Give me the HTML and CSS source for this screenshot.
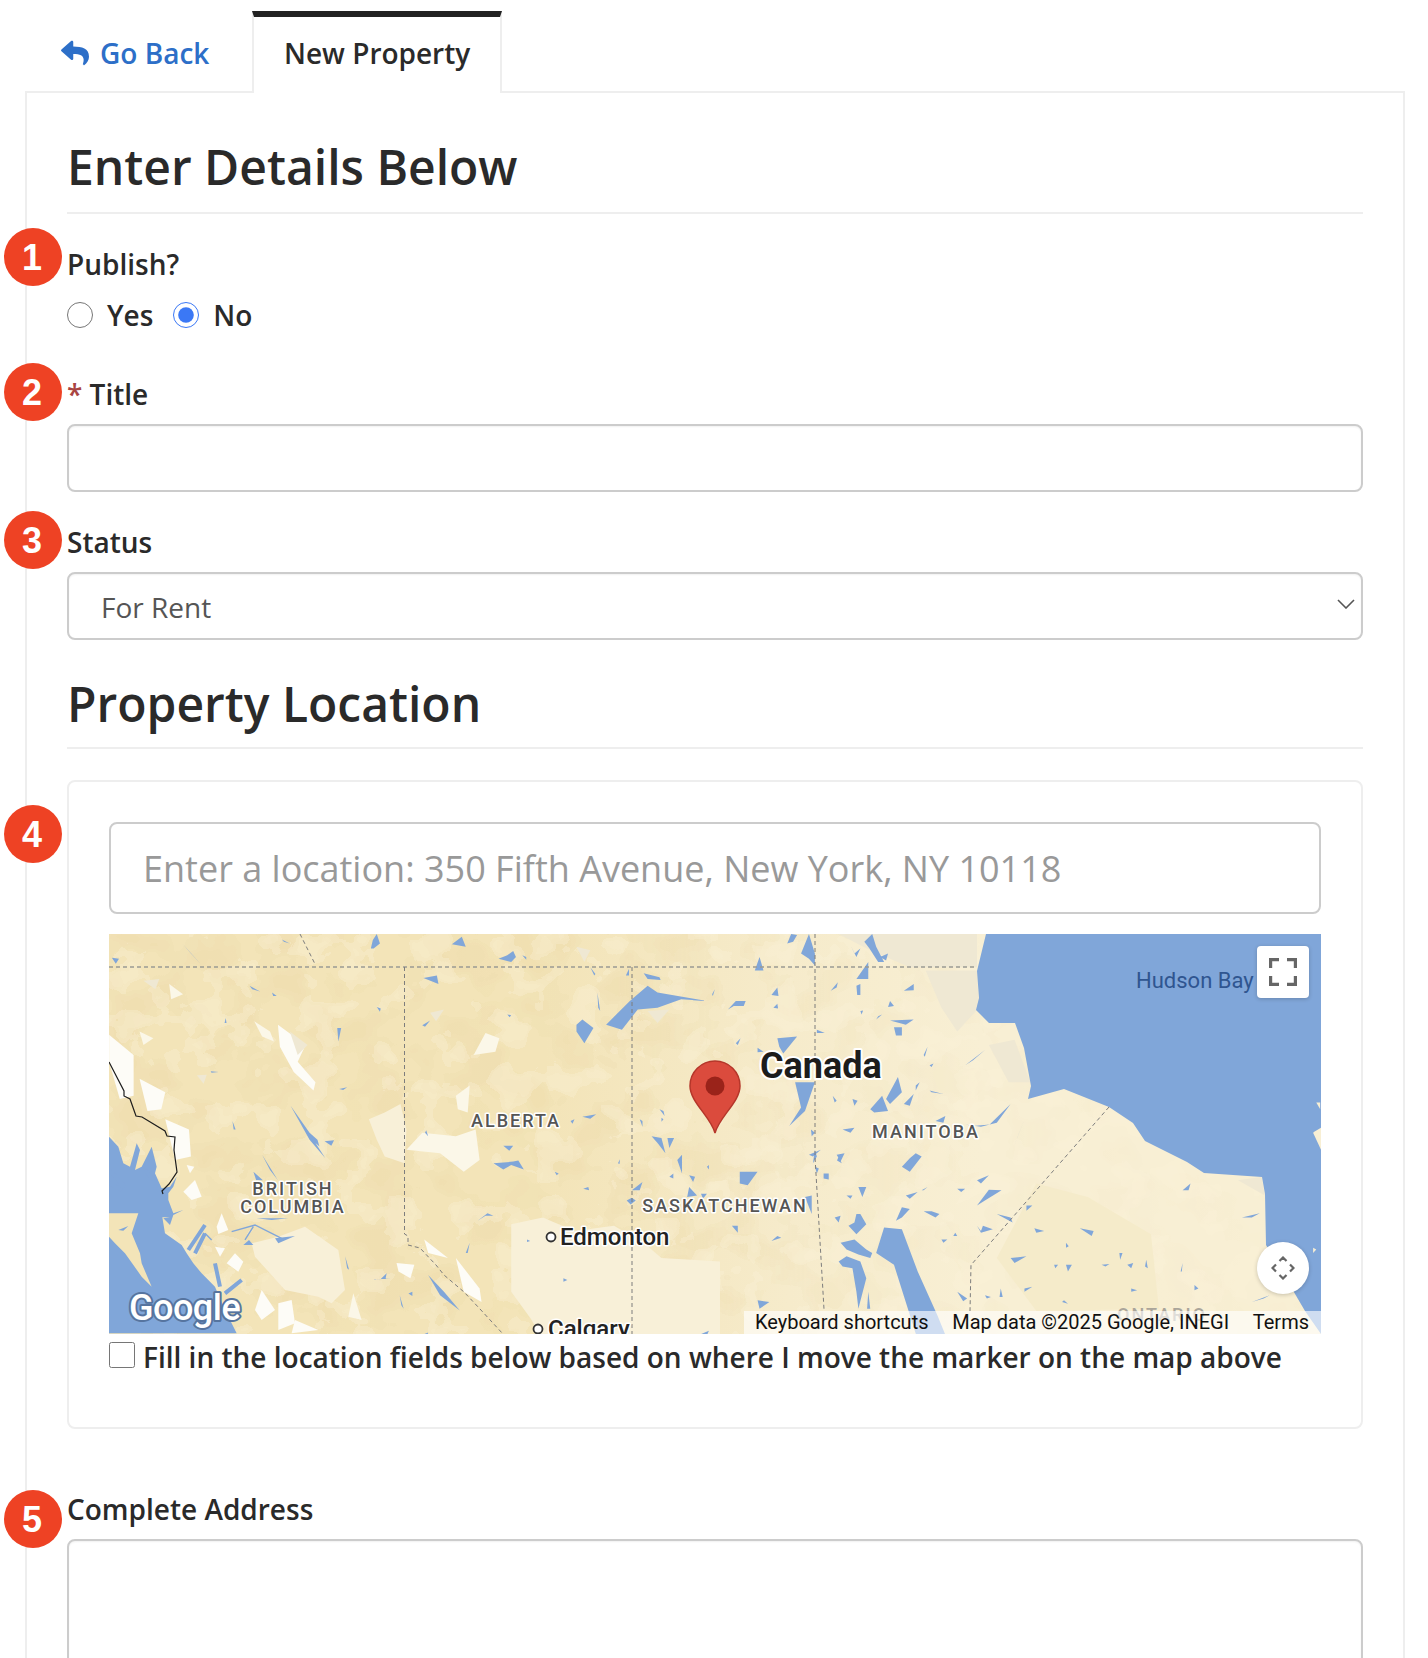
FILE: index.html
```html
<!DOCTYPE html>
<html lang="en">
<head>
<meta charset="utf-8">
<title>New Property</title>
<link rel="stylesheet" href="styles.css">
</head>
<body>
<div class="page">
  <nav class="tabs">
    <a class="tab tab-back">
      <svg class="reply-icon" viewBox="0 0 512 512"><path d="M8.309 189.836L184.313 37.851C199.719 24.546 224 35.347 224 56.015v80.053c160.629 1.839 288 34.032 288 186.258 0 61.441-39.581 122.309-83.333 154.132-13.653 9.931-33.111-2.533-28.077-18.631 45.344-145.012-21.507-183.51-176.59-185.742V360c0 20.7-24.3 31.453-39.687 18.164l-176.004-152c-11.071-9.562-11.086-26.753 0-36.328z"/></svg>
      Go Back
    </a>
    <a class="tab tab-active">New Property</a>
  </nav>
  <main class="panel">
    <h2 class="heading">Enter Details Below</h2>

    <section class="field field-publish">
      <span class="badge badge-1">1</span>
      <div class="label">Publish?</div>
      <div class="radios">
        <label class="radio"><input type="radio" name="publish">Yes</label>
        <label class="radio"><input type="radio" name="publish" checked>No</label>
      </div>
    </section>

    <section class="field field-title">
      <span class="badge badge-2">2</span>
      <div class="label"><span class="req">*</span> Title</div>
      <input class="control" type="text">
    </section>

    <section class="field field-status">
      <span class="badge badge-3">3</span>
      <div class="label">Status</div>
      <div class="select-wrap">
        <select class="control select"><option>For Rent</option></select>
        <svg class="chevron" viewBox="0 0 18 10"><path d="M1 1l8 8 8-8"/></svg>
      </div>
    </section>

    <h2 class="heading heading-location">Property Location</h2>

    <section class="card">
      <span class="badge badge-4">4</span>
      <input class="location" type="text" placeholder="Enter a location: 350 Fifth Avenue, New York, NY 10118">
      <div class="map">
        <svg class="map-svg" viewBox="0 0 1212 400" preserveAspectRatio="none">
          <defs>
            <filter id="patchA" x="0" y="0" width="100%" height="100%" color-interpolation-filters="sRGB">
              <feTurbulence type="fractalNoise" baseFrequency=".02 .024" numOctaves="3" seed="7"/>
              <feColorMatrix values="0 0 0 0 .93  0 0 0 0 .86  0 0 0 0 .67  1.6 0 0 0 -.3"/>
              <feComponentTransfer><feFuncA type="discrete" tableValues="0 0 0 0 .2 .35 .5 .5"/></feComponentTransfer>
            </filter>
            <filter id="patchB" x="0" y="0" width="100%" height="100%" color-interpolation-filters="sRGB">
              <feTurbulence type="fractalNoise" baseFrequency=".026 .03" numOctaves="3" seed="23"/>
              <feColorMatrix values="0 0 0 0 .985  0 0 0 0 .95  0 0 0 0 .85  1.6 0 0 0 -.3"/>
              <feComponentTransfer><feFuncA type="discrete" tableValues="0 0 0 0 0 .3 .4 .4"/></feComponentTransfer>
            </filter>
            <linearGradient id="landFade" x1="0" x2="1" y1="0" y2="0">
              <stop offset="0" stop-color="#f3e4b8"/>
              <stop offset=".36" stop-color="#f3e4b8"/>
              <stop offset=".56" stop-color="#f6ebcb"/>
              <stop offset=".72" stop-color="#f8efd4"/>
            </linearGradient>
            <linearGradient id="fadeEast" x1="0" x2="1" y1="0" y2="0">
              <stop offset="0" stop-color="#fff"/>
              <stop offset=".42" stop-color="#eee"/>
              <stop offset=".6" stop-color="#555"/>
              <stop offset=".78" stop-color="#222"/>
              <stop offset="1" stop-color="#111"/>
            </linearGradient>
            <mask id="westMask"><rect width="1212" height="400" fill="url(#fadeEast)"/></mask>
          </defs>

          <rect class="land-base" width="1212" height="400"/>
          <g mask="url(#westMask)"><rect width="1212" height="400" filter="url(#patchA)"/></g>
          <rect width="1212" height="400" filter="url(#patchB)"/>

          <!-- lighter plains and snow fields, traced in zoomed-crop units -->
          <g transform="translate(-9 -14.2) scale(.3954 .3382)">
            <polygon class="pale" points="1040,900 1120,880 1200,920 1300,905 1380,960 1420,1000 1568,1010 1568,1242 1120,1242 1090,1180 1040,1100"/>
            <polygon class="pale" points="680,590 720,570 760,545 775,620 770,720 720,700 700,650"/>
            <polygon class="snowish" points="815,630 900,640 950,620 960,710 920,745 860,690 775,680"/>
            <polygon class="snowish" points="945,400 975,335 1010,350 1000,390"/>
            <polygon class="snowish" points="900,520 935,490 930,570 905,560"/>
            <polygon class="snow" points="23,340 85,400 85,520 50,530 23,420"/>
            <polygon class="snow" points="100,470 165,510 155,560 120,565"/>
            <polygon class="snow" points="165,590 225,620 230,700 190,710"/>
            <polygon class="snow" points="450,310 520,370 500,420 545,480 540,505 490,450 455,375"/>
            <polygon class="snowish" points="390,300 430,330 440,360 410,345"/>
            <polygon class="snowish" points="175,190 210,220 180,235"/>
            <polygon class="snowish" points="100,330 135,350 110,370"/>
            <polygon class="snow" points="820,945 880,1000 830,985"/>
            <polygon class="snow" points="900,1000 960,1090 965,1130 920,1100"/>
            <polygon class="snow" points="750,1015 795,1020 785,1060 755,1040"/>
            <polygon class="gray" points="110,180 150,175 140,205"/>
            <polygon class="gray" points="245,460 270,458 262,485"/>
            <polygon class="gray" points="480,330 525,370 500,400"/>
            <polygon class="gray" points="835,275 870,265 850,300"/>
            <polygon class="gray" points="1205,80 1240,90 1225,125"/>
            <polygon class="gray" points="1385,270 1440,265 1410,305"/>
          </g>
          <!-- coast and snow traced at 3x from the lower-left corner -->
          <g transform="translate(-4 196) scale(.3333)">
            <polygon class="pale" points="440,340 520,320 600,290 700,360 720,480 680,520 640,500 540,480 450,380"/>
            <polygon class="water" points="12,20 40,50 55,100 75,110 95,40 105,60 90,120 110,110 140,50 155,110 150,130 170,175 195,170 215,140 205,170 190,190 190,210 205,250 235,240 205,255 195,285 175,265 195,262 172,262 180,310 230,345 245,370 265,400 290,430 330,470 360,540 395,610 12,610"/>
            <polygon class="land-w" points="12,250 40,250 100,250 80,310 105,370 110,400 140,470 110,440 60,370 30,340 12,320"/>
            <polygon class="water" points="40,300 70,288 55,302"/>
            <path class="river wide" d="M250 360L300 285M270 370L300 310M330 400L345 470M360 490L410 450M12 120L60 170M12 160L50 180M120 120L145 150"/>
            <path class="river" d="M380 305L450 285L530 325M445 290L420 330M300 310L320 330"/>
            <polygon class="water" points="510,325 570,318 520,340"/>
            <polygon class="water" points="415,345 432,330 445,345"/>
            <polygon class="water" points="455,265 550,265 500,270"/>
            <polygon class="snow" points="235,185 270,150 290,200 260,210"/>
            <polygon class="snow" points="245,105 268,110 255,130"/>
            <polygon class="snow" points="335,290 350,250 370,300 340,312"/>
            <polygon class="snow" points="330,350 360,355 345,380"/>
            <polygon class="snow" points="365,400 390,370 415,395 400,425"/>
            <polygon class="snow" points="470,480 510,540 470,570 450,540"/>
            <polygon class="snow" points="520,520 560,510 570,580 520,600"/>
            <polygon class="snow" points="570,570 640,600 560,610"/>
            <polygon class="snowish" points="745,490 770,570 730,560"/>
          </g>
          <g transform="translate(611 -14.2) scale(.3954 .3382)">
            <polygon class="tan" points="800,780 930,820 1090,930 1110,1150 800,1157 700,1000"/>
            <polygon class="gray" points="300,42 650,42 650,140 480,140 380,90"/>
            <polygon class="gray" points="520,150 650,150 655,260 600,330 560,260"/>
            <polygon class="gray" points="680,370 745,355 785,480 730,480"/>
            <polygon class="gray" points="1310,770 1370,760 1378,815"/>
          </g>

          <!-- water -->
          <polygon class="water" points="877,0 868,37 870,64 867,76 880,89 906,89 915,114 922,152 919,165 955,155 1000,173 1024,189 1036,207 1078,228 1095,239 1153,243 1156,260 1157,311 1165,324 1196,377 1212,400 1212,0"/>
          <g transform="translate(-9 -14.2) scale(.3954 .3382)">
            <path class="water" d="M1280 310L1340 240L1385 195L1410 215L1535 240L1470 235L1410 260L1360 265L1320 325ZM1205 310L1220 295L1248 320L1225 365L1205 330ZM685 85L690 60L700 42L708 70L692 85ZM890 72L915 50L925 80ZM1008 115L1030 105L1045 92L1052 110L1040 125ZM1068 105L1078 110L1078 118ZM818 172L852 165L856 190ZM1375 158L1415 170L1418 178L1385 175ZM1240 140L1253 160L1250 165ZM1330 165L1338 145L1338 165ZM1258 215L1265 270L1260 260ZM700 258L710 262L708 272ZM1030 280L1040 282L1036 288ZM815 312L835 298L822 316ZM1548 220L1555 205L1550 225ZM318 290L320 305L315 305ZM280 448L300 450L282 452ZM605 500L625 495L615 503ZM482 550L530 630L550 650L555 670L545 660L570 705L530 650ZM568 655L592 652L585 668ZM410 695L450 770L430 740ZM388 745L395 770L412 770ZM335 595L343 620L338 620ZM600 320L610 320L603 360ZM825 622L830 640L822 630ZM1020 668L1045 668L1035 683ZM995 720L1045 715L1058 712L1072 738L1040 725L1020 738ZM1150 745L1160 750L1155 755ZM1190 595L1200 590L1195 603ZM1220 582L1255 575L1240 588ZM1222 795L1235 790L1237 800ZM955 890L980 868L995 875L975 875ZM1080 945L1088 950L1080 953ZM925 985L935 955L930 985ZM1172 1060L1182 1065L1172 1070ZM620 995L630 1035L625 1030ZM830 1050L870 1100L910 1155L860 1110ZM685 1065L710 1062L725 1045L722 1062L735 1060ZM758 1110L768 1150L762 1140ZM780 1105L790 1100L790 1112ZM1415 560L1425 565L1428 580ZM1365 590L1372 595L1372 612ZM1395 640L1420 645L1430 690L1410 660ZM1435 645L1452 645L1440 675ZM1460 710L1472 695L1472 750ZM1440 760L1450 750L1450 765ZM1490 755L1505 760L1500 775ZM1490 790L1510 815L1485 820ZM1520 810L1535 810L1525 825ZM1310 720L1315 708L1314 722ZM1345 800L1372 775L1365 800ZM1332 830L1345 822L1355 830L1342 842ZM1420 585L1425 590L1420 597ZM1535 730L1540 725L1540 738ZM208 70L258 135L230 100ZM30 112L48 115L40 130ZM460 58L480 70L465 65ZM378 195L405 212L385 205ZM435 215L447 225L438 225ZM1190 1220L1215 1210L1205 1230ZM800 1235L830 1220L825 1242ZM1510 1230L1540 1215L1530 1242Z"/>
          </g>
          <g transform="translate(611 -14.2) scale(.3954 .3382)">
            <path class="water" d="M170 70L180 42L195 45L185 65ZM205 100L225 42L240 100L240 135L225 115ZM88 150L100 110L110 150ZM330 75L345 110L355 85L340 100ZM365 65L385 42L395 80L415 125L400 125L378 85ZM405 110L425 100L420 120ZM345 175L375 125L375 175ZM345 195L355 190L355 222L347 222ZM465 210L490 190L490 208ZM280 210L298 185L295 200ZM130 222L145 200L148 225ZM20 265L40 240L65 240L60 255L35 255ZM135 260L145 248L147 262ZM430 240L440 255L425 258ZM355 270L362 268L358 280ZM440 318L460 318L460 342L445 342ZM400 285L410 280L395 295ZM430 298L490 295L470 310ZM245 325L265 335L245 335ZM145 350L195 345L160 395L150 375ZM40 365L52 350L45 370ZM95 378L110 390L95 392ZM515 400L525 375L518 405ZM620 430L670 385L640 415ZM530 430L540 425L535 435ZM420 530L450 465L460 510L430 545ZM380 560L410 520L425 565L390 570ZM190 480L240 480L215 565L175 610L205 555ZM530 505L565 515L535 510ZM285 520L295 535L290 540ZM335 530L348 535L340 550ZM495 490L505 480L495 505ZM465 545L490 515L480 550ZM620 605L640 610L682 605L735 545L700 600L660 612ZM740 680L770 590L750 650ZM545 595L570 580L565 600ZM310 620L340 615L330 630ZM230 620L240 630L232 640ZM225 695L255 680L235 700ZM295 695L315 690L305 715ZM240 730L250 735L245 750ZM262 750L275 750L275 768L262 765ZM460 730L480 705L495 690L510 700L480 745ZM50 745L95 745L70 785L50 780ZM650 770L680 755L660 780ZM600 795L620 795L610 805ZM650 845L680 798L712 800L670 830ZM470 815L500 805L480 825ZM350 790L370 790L360 820ZM510 800L525 790L515 800ZM320 815L335 815L330 825ZM535 862L555 870L545 880L515 862ZM215 820L232 815L232 870ZM30 905L45 905L45 925ZM145 935L155 940L130 950ZM560 945L575 945L565 955ZM595 925L600 935L590 935ZM650 905L660 920L665 905L690 915L660 925ZM700 870L735 880L740 895ZM775 845L790 845L775 860ZM795 912L820 920L800 925ZM910 912L945 920L940 935ZM1165 1040L1170 1015L1168 1040ZM875 955L882 965L875 970ZM965 1020L985 1018L975 1025ZM1030 1020L1045 1015L1040 1030ZM1078 1005L1082 1030L1075 1025ZM875 1020L890 1020L880 1040ZM845 1020L855 1020L848 1030ZM1010 985L1018 985L1012 1005ZM1200 1080L1210 1090L1200 1095ZM1040 1090L1055 1095L1040 1100ZM770 1090L790 1085L770 1100ZM600 1100L625 1120L615 1128ZM670 1110L685 1115L675 1120ZM710 1090L715 1115L707 1115ZM870 1125L880 1135L865 1130ZM95 1125L125 1130L100 1150ZM735 1000L775 995L745 1015ZM305 955L340 945L370 975L385 985L380 1000L350 990L320 975ZM345 870L355 870L370 900L345 930L325 905L340 895ZM300 1010L320 995L355 1010L370 1060L350 1150L345 1100L335 1030L310 1025ZM290 880L305 875L300 895ZM460 850L480 855L460 880L445 890ZM395 985L415 910L460 915L500 1040L550 1170L575 1242L500 1242L440 1020ZM1170 800L1190 780L1185 800ZM1320 880L1365 868L1345 880ZM1345 1130L1390 1110L1375 1120ZM375 1100L380 1150L372 1150ZM240 680L245 700L235 720ZM300 700L308 720L296 712Z"/>
            <polygon class="land-e" points="1505,625 1520,615 1520,680 1500,630"/>
            <polygon class="land-e" points="1508,540 1518,540 1518,560"/>
            <polygon class="land-e" points="1500,970 1508,975 1500,985"/>
          </g>

          <!-- borders -->
          <polyline class="border-black" points="0,128 15,157 15,162 21,165 27,182 33,183 56,197 58,202 66,203 65,216 68,238 60,250 53,257 54,260"/>
          <line class="border-wide" x1="0" y1="33" x2="868" y2="33"/>
          <polyline class="border" points="191,0 206,30"/>
          <polyline class="border" points="295.5,33 295.5,300 299,302 299,311 311,314 327,331 335,341 355,358 371,375 394,400"/>
          <line class="border" x1="523" y1="33" x2="523" y2="400"/>
          <polyline class="border" points="706,0 706,223 715,375"/>
          <polyline class="border" points="1000,173 862,331 861,377"/>

          <!-- labels -->
          <text class="t-region" x="407" y="193" text-anchor="middle">ALBERTA</text>
          <text class="t-region" x="184" y="261" text-anchor="middle">BRITISH</text>
          <text class="t-region" x="184" y="279" text-anchor="middle">COLUMBIA</text>
          <text class="t-region" x="817" y="204" text-anchor="middle">MANITOBA</text>
          <text class="t-region" x="616" y="278" text-anchor="middle">SASKATCHEWAN</text>
          <text class="t-region t-faint" x="1053" y="387" text-anchor="middle">ONTARIO</text>
          <text class="t-country" x="651" y="144">Canada</text>
          <circle class="t-dot" cx="442" cy="303" r="4.5"/>
          <text class="t-city" x="451" y="311">Edmonton</text>
          <circle class="t-dot" cx="429" cy="395" r="4.5"/>
          <text class="t-city" x="439" y="403">Calgary</text>
          <text class="t-water" x="1027" y="54">Hudson Bay</text>
          <text class="t-google" x="20" y="386">Google</text>

          <!-- marker -->
          <path class="pin" d="M606 199C602 183 581 168 581 152A25 25 0 1 1 631 152C631 168 610 183 606 199Z"/>
          <circle class="pin-dot" cx="606" cy="152" r="9.5"/>
        </svg>

        <button class="map-btn map-full" type="button" aria-label="Fullscreen">
          <svg viewBox="0 0 28 28"><path d="M1.500 10V1.500H10M18 1.500H26.500V10M26.500 18V26.500H18M10 26.500H1.500V18"/></svg>
        </button>
        <button class="map-btn map-compass" type="button" aria-label="Move">
          <svg viewBox="0 0 24 24"><path d="M8.500 5L12 1.500L15.500 5M5 8.500L1.500 12L5 15.500M19 8.500L22.500 12L19 15.500M8.500 19L12 22.500L15.500 19"/></svg>
        </button>
        <div class="attrib">
          <span>Keyboard shortcuts</span>
          <span>Map data ©2025 Google, INEGI</span>
          <span>Terms</span>
        </div>
      </div>
      <label class="check"><input type="checkbox">Fill in the location fields below based on where I move the marker on the map above</label>
    </section>

    <section class="field field-address">
      <span class="badge badge-5">5</span>
      <div class="label">Complete Address</div>
      <textarea class="control textarea"></textarea>
    </section>
  </main>
</div>
</body>
</html>
```
FILE: styles.css
```css
* { box-sizing: border-box; }
html, body { margin: 0; padding: 0; background: #fff; }
body {
  height: 1658px;
  overflow: hidden;
  font-family: "Open Sans", "Noto Sans", sans-serif;
  color: #2a2a2a;
}
.page { padding: 11px 23px 0 25px; }

/* tabs */
.tabs { display: flex; height: 80px; }
.tab { display: flex; align-items: center; font-size: 28px; font-weight: 600; line-height: 36px; }
.tab-back { width: 227px; padding: 4px 0 0 36px; color: #2d6fc8; gap: 11px; }
.reply-icon { width: 28px; height: 28px; fill: #2d6fc8; }
.tab-active {
  position: relative;
  z-index: 1;
  width: 250px;
  height: 82px;
  padding: 0 0 4px 30px;
  background: #fff;
  border: 2px solid #eee;
  border-top: 6px solid #222;
  border-bottom: 0;
}

/* panel */
.panel {
  position: relative;
  height: 1600px;
  padding: 43px 40px 0;
  border: 2px solid #eee;
}
.heading {
  margin: 0;
  padding-bottom: 14px;
  font-size: 48px;
  line-height: 62px;
  font-weight: 600;
  border-bottom: 2px solid #eee;
}
.heading-location { margin-top: 33px; padding-bottom: 12px; }

.field { position: relative; }
.field-publish { margin-top: 32px; }
.field-title { margin-top: 43px; }
.field-status { margin-top: 32px; }
.field-address { margin-top: 62px; }

.label { font-size: 28px; font-weight: 600; line-height: 36px; margin-bottom: 12px; }
.req { color: #a94442; }

.radios { display: flex; gap: 20px; margin-top: 15px; }
.radio { display: flex; align-items: center; font-size: 28px; font-weight: 600; line-height: 36px; }
.radio input {
  width: 26px;
  height: 26px;
  margin: 0 14px 0 0;
  accent-color: #3b78f5;
}
.field-publish .label { margin-bottom: 0; }

.control {
  display: block;
  width: 100%;
  height: 68px;
  border: 2px solid #ccc;
  border-radius: 8px;
  background: #fff;
  box-shadow: inset 0 1px 2px rgba(0,0,0,.06);
  font-family: inherit;
  outline: none;
}
.select-wrap { position: relative; }
.select {
  appearance: none;
  padding: 2px 32px 0;
  font-size: 28px;
  color: #555;
}
.chevron {
  position: absolute;
  right: 8px;
  top: 27px;
  width: 18px;
  height: 10px;
  fill: none;
  stroke: #555;
  stroke-width: 1.6;
}
.textarea { height: 240px; resize: none; }

/* card */
.card {
  position: relative;
  margin-top: 31px;
  height: 649px;
  padding: 40px 40px 0;
  border: 2px solid #eee;
  border-radius: 8px;
}
.location {
  display: block;
  width: 100%;
  height: 92px;
  padding: 0 32px;
  border: 2px solid #ccc;
  border-radius: 8px;
  font-family: "Open Sans", sans-serif;
  font-size: 36px;
  color: #333;
  outline: none;
}
.location::placeholder { color: #999; opacity: 1; }

.map {
  position: relative;
  margin-top: 20px;
  height: 400px;
  overflow: hidden;
  background: #f8efd4;
}
.map-svg { display: block; width: 100%; height: 100%; }

.land-base { fill: url(#landFade); }
.land-w { fill: #f3e4b8; }
.land-e { fill: #f8efd4; }
.pale { fill: #f8f0d8; }
.tan { fill: #f5ebca; }
.snow { fill: #fdfcf7; }
.snowish { fill: #fbf7e8; }
.gray { fill: #efe8d3; }
.water { fill: #80a6d9; }
.river { fill: none; stroke: #80a6d9; stroke-width: 1.4; vector-effect: non-scaling-stroke; }
.wide { stroke-width: 4; }
.border-black { fill: none; stroke: #1d1d1d; stroke-width: 1.2; }
.border { fill: none; stroke: #7d7d7d; stroke-width: 1; stroke-dasharray: 4 3; }
.border-wide { stroke: #9a9a94; stroke-width: 1.6; stroke-dasharray: 4 3; }

.map-svg text { font-family: Roboto, sans-serif; paint-order: stroke; stroke-linejoin: round; }
.t-region {
  font-size: 18px;
  font-weight: 500;
  letter-spacing: 2px;
  fill: #555;
  stroke: #fff;
  stroke-width: 3px;
}
.t-faint { fill: #aaa59a; stroke: none; }
.t-country { font-size: 36px; font-weight: 700; fill: #1c1c1c; stroke: #fff; stroke-width: 4px; }
.t-city { font-size: 24px; font-weight: 500; fill: #222; stroke: #fff; stroke-width: 3px; }
.t-dot { fill: #fff; stroke: #333; stroke-width: 1.8; }
.t-water { font-size: 22px; fill: #2f5590; }
.t-google { font-size: 36px; font-weight: 500; letter-spacing: -.5px; fill: #fff; stroke: #56749f; stroke-width: 4px; }
.pin { fill: #db4b3d; stroke: #b5362a; stroke-width: 1.5; }
.pin-dot { fill: #9a231a; }

.map-btn {
  position: absolute;
  right: 12px;
  display: flex;
  align-items: center;
  justify-content: center;
  width: 52px;
  padding: 0;
  border: 0;
  background: #fff;
  box-shadow: 0 1px 4px rgba(0,0,0,.2);
}
.map-btn svg { fill: none; stroke: #666; }
.map-full { top: 12px; height: 52px; border-radius: 4px; }
.map-full svg { width: 28px; height: 28px; stroke-width: 3.4px; }
.map-compass { top: 308px; height: 52px; border-radius: 50%; }
.map-compass svg { width: 24px; height: 24px; stroke-width: 2.2px; }

.attrib {
  position: absolute;
  right: 0;
  bottom: 0;
  display: flex;
  width: 577px;
  height: 23px;
  padding: 0 12px 0 11px;
  justify-content: space-between;
  align-items: center;
  background: rgba(255,255,255,.62);
  font-family: Roboto, sans-serif;
  font-size: 20px;
  line-height: 23px;
  color: #111;
}

.check {
  display: flex;
  align-items: flex-start;
  margin-top: 5px;
  font-size: 28px;
  font-weight: 600;
  line-height: 36px;
  white-space: nowrap;
}
.check input {
  width: 26px;
  height: 26px;
  margin: 3px 8px 0 0;
}

/* numbered badges */
.badge {
  position: absolute;
  left: -63px;
  display: flex;
  align-items: center;
  justify-content: center;
  width: 58px;
  height: 58px;
  padding: 2px 2px 0 0;
  border-radius: 50%;
  background: #ee4224;
  color: #fff;
  font-family: "Liberation Sans", sans-serif;
  font-size: 36px;
  font-weight: 700;
}
.badge-1 { top: -18px; }
.badge-2 { top: -13px; }
.badge-3 { top: -13px; }
.badge-4 { top: 23px; left: -65px; }
.badge-5 { top: -1px; }
```
